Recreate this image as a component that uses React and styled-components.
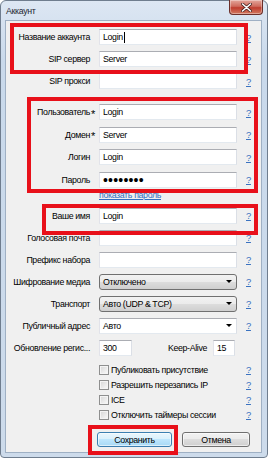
import React from 'react';
import styled, { createGlobalStyle } from 'styled-components';

const GlobalStyle = createGlobalStyle`
  html, body {
    margin: 0;
    padding: 0;
    background: #fff;
  }
  body {
    font-family: "Liberation Sans", Arial, sans-serif;
    font-size: 8.8px;
    letter-spacing: -0.35px;
    color: #000;
  }
`;

const Stage = styled.div`
  position: relative;
  width: 268px;
  height: 460px;
`;

const Window = styled.div`
  width: 268px;
  height: 458px;
  box-sizing: border-box;
  border: 1px solid #6f7d8e;
  border-radius: 6px 6px 4px 4px;
  background: linear-gradient(#dde7f3, #c9d9eb 60px, #cddbeb);
  padding: 0 5px 4px 4px;
  display: flex;
  flex-direction: column;
`;

const TitleBar = styled.div`
  height: 19px;
  display: flex;
  align-items: flex-start;
  justify-content: space-between;
`;

const Title = styled.div`
  padding: 5px 0 0 1px;
  color: #1e2732;
`;

const CloseButton = styled.div`
  width: 34px;
  height: 15px;
  margin: -1px -1px 0 0;
  box-sizing: border-box;
  border: 1px solid #6b2f2a;
  border-top: none;
  border-radius: 0 0 4px 4px;
  background: linear-gradient(#e4a79c, #cf6b5d 45%, #bf3d2e 55%, #d27a62);
  box-shadow: inset 0 0 0 1px rgba(255, 255, 255, 0.35);
  display: flex;
  align-items: center;
  justify-content: center;
`;

const Body = styled.div`
  flex: 1;
  background: #f0f0f0;
  border: 1px solid #9fb0c4;
  padding-top: 8px;
  display: flex;
  flex-direction: column;
`;

const Section = styled.div`
  display: flex;
  flex-direction: column;
  gap: ${(p) => p.$gap}px;
  margin-top: ${(p) => p.$top || 0}px;
`;

const Row = styled.div`
  display: grid;
  grid-template-columns: 84px 138px auto;
  column-gap: 9px;
  align-items: center;
  height: ${(p) => p.$h || 16}px;
`;

const Label = styled.div`
  display: flex;
  align-items: center;
  justify-content: flex-end;
  white-space: nowrap;
`;

const Required = styled.span`
  width: 6px;
  margin-right: -7px;
  padding-left: 1px;
  font-size: 11px;
  line-height: 1;
  transform: translateY(2px);
`;

const TextBox = styled.div`
  height: 16px;
  width: ${(p) => (p.$w ? `${p.$w}px` : 'auto')};
  box-sizing: border-box;
  border: 1px solid;
  border-color: #abadb3 #dbdfe6 #e3e9ef #e2e3ea;
  background: #fff;
  padding-left: 3px;
  display: flex;
  align-items: center;
  white-space: nowrap;
`;

const Caret = styled.span`
  display: inline-block;
  width: 1px;
  height: 11px;
  background: #000;
  margin-left: 1px;
`;

const Dots = styled.span`
  font-size: 14px;
  letter-spacing: 0.2px;
  line-height: 1;
`;

const Combo = styled.div`
  height: 16px;
  box-sizing: border-box;
  padding: 0 4px 0 3px;
  display: flex;
  align-items: center;
  justify-content: space-between;
  border: 1px solid;
  border-color: ${(p) => (p.$editable ? '#abadb3 #dbdfe6 #e3e9ef #e2e3ea' : '#707070')};
  border-radius: ${(p) => (p.$editable ? 0 : 3)}px;
  background: ${(p) =>
    p.$editable ? '#fff' : 'linear-gradient(#f2f2f2, #ebebeb 50%, #dddddd 50%, #cfcfcf)'};
`;

const Arrow = styled.span`
  width: 0;
  height: 0;
  border-left: 3px solid transparent;
  border-right: 3px solid transparent;
  border-top: 3px solid #000;
`;

const Help = styled.a`
  color: #3a72c0;
  text-decoration: underline;
  font-size: 9.5px;
`;

const LinkRow = styled.div`
  height: 14px;
  display: flex;
  align-items: center;
  padding-left: 93px;
`;

const Link = styled.a`
  color: #2f6fc4;
  text-decoration: underline;
`;

const Split = styled.div`
  display: flex;
  align-items: center;
  gap: 6px;
  padding-right: 2px;
`;

const Spacer = styled.div`
  flex: 1;
`;

const CheckLine = styled.div`
  display: flex;
  align-items: center;
  gap: 2px;
  white-space: nowrap;
`;

const CheckBox = styled.span`
  width: 10px;
  height: 10px;
  box-sizing: border-box;
  border: 1px solid #8e8f8f;
  background: linear-gradient(135deg, #d6d6d6, #fbfbfb);
  box-shadow: inset 0 0 0 1px #f4f4f4;
`;

const ButtonRow = styled.div`
  display: flex;
  gap: 10px;
  padding-left: 91px;
  margin-top: 10px;
`;

const Button = styled.div`
  width: ${(p) => p.$w}px;
  height: 15px;
  box-sizing: border-box;
  border: 1px solid ${(p) => (p.$primary ? '#3c7fb1' : '#707070')};
  border-radius: 3px;
  background: ${(p) =>
    p.$primary
      ? 'linear-gradient(#eaf6fd, #d9f0fc 50%, #bee6fd 50%, #a7d9f5)'
      : 'linear-gradient(#f2f2f2, #ebebeb 50%, #dddddd 50%, #cfcfcf)'};
  box-shadow: inset 0 0 0 1px rgba(255, 255, 255, 0.6);
  display: flex;
  align-items: center;
  justify-content: center;
`;

const Mark = styled.div`
  position: absolute;
  box-sizing: border-box;
  border: 4px solid #e8101a;
  pointer-events: none;
`;

const marks = [
  { left: 10, top: 23, width: 238, height: 51 },
  { left: 27, top: 97, width: 231, height: 96 },
  { left: 42, top: 204, width: 216, height: 31 },
  { left: 88, top: 425, width: 90, height: 30 },
];

const Field = ({ label, required, children }) => (
  <Row>
    <Label>
      {label}
      {required && <Required>*</Required>}
    </Label>
    {children}
    <Help>?</Help>
  </Row>
);

const checks = [
  'Публиковать присутствие',
  'Разрешить перезапись IP',
  'ICE',
  'Отключить таймеры сессии',
];

export default function App() {
  return (
    <Stage>
      <GlobalStyle />
      <Window>
        <TitleBar>
          <Title>Аккаунт</Title>
          <CloseButton>
            <svg width="11" height="9" viewBox="0 0 11 9">
              <path
                d="M1.5 1 L9.5 8 M9.5 1 L1.5 8"
                stroke="#4a2420"
                strokeWidth="3"
                strokeLinecap="round"
              />
              <path
                d="M1.5 1 L9.5 8 M9.5 1 L1.5 8"
                stroke="#fff"
                strokeWidth="1.6"
                strokeLinecap="round"
              />
            </svg>
          </CloseButton>
        </TitleBar>
        <Body>
          <Section $gap={6}>
            <Field label="Название аккаунта">
              <TextBox>
                Login
                <Caret />
              </TextBox>
            </Field>
            <Field label="SIP сервер">
              <TextBox>Server</TextBox>
            </Field>
            <Field label="SIP прокси">
              <TextBox />
            </Field>
          </Section>

          <Section $gap={6.5} $top={15}>
            <Field label="Пользователь" required>
              <TextBox>Login</TextBox>
            </Field>
            <Field label="Домен" required>
              <TextBox>Server</TextBox>
            </Field>
            <Field label="Логин">
              <TextBox>Login</TextBox>
            </Field>
            <Field label="Пароль">
              <TextBox>
                <Dots>••••••••</Dots>
              </TextBox>
            </Field>
          </Section>

          <LinkRow>
            <Link>показать пароль</Link>
          </LinkRow>

          <Section $gap={6} $top={6}>
            <Field label="Ваше имя">
              <TextBox>Login</TextBox>
            </Field>
            <Field label="Голосовая почта">
              <TextBox />
            </Field>
            <Field label="Префикс набора">
              <TextBox />
            </Field>
            <Field label="Шифрование медиа">
              <Combo>
                Отключено
                <Arrow />
              </Combo>
            </Field>
            <Field label="Транспорт">
              <Combo>
                Авто (UDP &amp; TCP)
                <Arrow />
              </Combo>
            </Field>
            <Field label="Публичный адрес">
              <Combo $editable>
                Авто
                <Arrow />
              </Combo>
            </Field>
            <Row>
              <Label>Обновление регис...</Label>
              <Split>
                <TextBox $w={33}>300</TextBox>
                <Spacer />
                <span>Keep-Alive</span>
                <TextBox $w={22}>15</TextBox>
              </Split>
            </Row>
          </Section>

          <Section $gap={0} $top={6.5}>
            {checks.map((c) => (
              <Row key={c} $h={15}>
                <span />
                <CheckLine>
                  <CheckBox />
                  {c}
                </CheckLine>
                <Help>?</Help>
              </Row>
            ))}
          </Section>

          <ButtonRow>
            <Button $w={75} $primary>
              Сохранить
            </Button>
            <Button $w={68}>Отмена</Button>
          </ButtonRow>
        </Body>
      </Window>
      {marks.map((m, i) => (
        <Mark key={i} style={m} />
      ))}
    </Stage>
  );
}
